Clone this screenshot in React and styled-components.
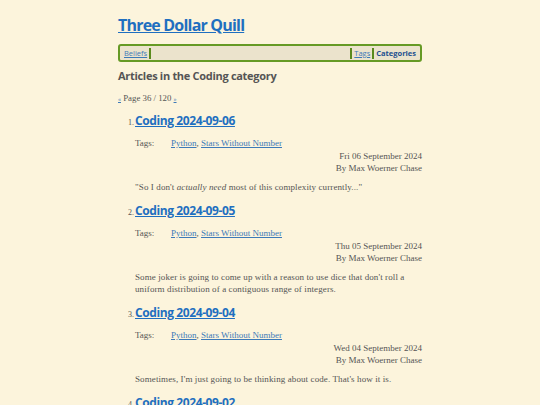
import React from "react";
import styled, { createGlobalStyle } from "styled-components";

const GlobalStyle = createGlobalStyle`
  body {
    margin: 0;
    background: #fcf4dc;
    font-family: "Liberation Serif", serif;
    color: #555;
  }
`;

const Page = styled.div`
  width: 304px;
  margin: 0 auto;
  padding-top: 14px;
`;

const SiteTitle = styled.a`
  display: block;
  font-family: "Open Sans", sans-serif;
  font-weight: 700;
  font-size: 16px;
  letter-spacing: -0.8px;
  line-height: 22px;
  color: #1f6fc0;
  text-decoration: underline;
`;

const Nav = styled.nav`
  display: flex;
  align-items: center;
  margin-top: 8px;
  height: 12px;
  padding: 1px 2px;
  border: 2px solid #669a25;
  border-radius: 3px;
  background: #ebe3cc;
  font-family: "Open Sans", sans-serif;
  font-size: 7.5px;
`;

const NavLink = styled.a`
  color: ${(p) => (p.$strong ? "#1d4f8f" : "#3d7ab8")};
  font-weight: ${(p) => (p.$strong ? 700 : 400)};
  text-decoration: ${(p) => (p.$strong ? "none" : "underline")};
  padding: 0 2px;
`;

const Sep = styled.span`
  width: 2px;
  height: 11px;
  background: #5a8a1c;
`;

const Spacer = styled.div`
  flex: 1;
`;

const Heading = styled.h1`
  margin: 5px 0 0;
  font-family: "Open Sans", sans-serif;
  font-weight: 700;
  font-size: 11px;
  letter-spacing: -0.3px;
  line-height: 18px;
  color: #555;
`;

const Pager = styled.div`
  margin-top: 7px;
  font-size: 8.8px;
  line-height: 12px;
  color: #555;
  a {
    color: #3d7ab8;
    font-size: 6px;
  }
`;

const List = styled.ol`
  list-style: none;
  margin: 6px 0 0;
  padding: 0;
`;

const Item = styled.li`
  margin-bottom: 8px;
`;

const TitleRow = styled.div`
  display: flex;
  align-items: baseline;
`;

const Num = styled.span`
  width: 17px;
  text-align: right;
  padding-right: 1px;
  box-sizing: border-box;
  font-size: 8px;
  color: #555;
`;

const PostTitle = styled.a`
  font-family: "Open Sans", sans-serif;
  font-weight: 700;
  font-size: 12px;
  letter-spacing: -0.4px;
  line-height: 20px;
  color: #1f6fc0;
  text-decoration: underline;
`;

const Body = styled.div`
  padding-left: 17px;
  font-size: 9px;
  line-height: 12px;
`;

const Tags = styled.div`
  display: flex;
  margin-top: 6px;
`;

const TagLabel = styled.span`
  width: 36px;
`;

const TagLink = styled.a`
  color: #3d7ab8;
  text-decoration: underline;
`;

const Meta = styled.div`
  margin-top: 1px;
  text-align: right;
`;

const Excerpt = styled.p`
  margin: 7px 0 0;
  letter-spacing: 0.1px;
`;

const posts = [
  {
    title: "Coding 2024-09-06",
    date: "Fri 06 September 2024",
    excerpt: (
      <>
        "So I don't <em>actually need</em> most of this complexity currently..."
      </>
    ),
  },
  {
    title: "Coding 2024-09-05",
    date: "Thu 05 September 2024",
    excerpt:
      "Some joker is going to come up with a reason to use dice that don't roll a uniform distribution of a contiguous range of integers.",
  },
  {
    title: "Coding 2024-09-04",
    date: "Wed 04 September 2024",
    excerpt: "Sometimes, I'm just going to be thinking about code. That's how it is.",
  },
  {
    title: "Coding 2024-09-02",
    date: "Mon 02 September 2024",
    excerpt: "",
  },
];

export default function App() {
  return (
    <>
      <GlobalStyle />
      <Page>
        <SiteTitle href="#">Three Dollar Quill</SiteTitle>
        <Nav>
          <NavLink href="#">Beliefs</NavLink>
          <Sep />
          <Spacer />
          <Sep />
          <NavLink href="#">Tags</NavLink>
          <Sep />
          <NavLink href="#" $strong>
            Categories
          </NavLink>
        </Nav>
        <Heading>Articles in the Coding category</Heading>
        <Pager>
          <a href="#">«</a> Page 36 / 120 <a href="#">»</a>
        </Pager>
        <List>
          {posts.map((p, i) => (
            <Item key={p.title}>
              <TitleRow>
                <Num>{i + 1}.</Num>
                <PostTitle href="#">{p.title}</PostTitle>
              </TitleRow>
              <Body>
                <Tags>
                  <TagLabel>Tags:</TagLabel>
                  <span>
                    <TagLink href="#">Python</TagLink>,{" "}
                    <TagLink href="#">Stars Without Number</TagLink>
                  </span>
                </Tags>
                <Meta>
                  {p.date}
                  <br />
                  By Max Woerner Chase
                </Meta>
                <Excerpt>{p.excerpt}</Excerpt>
              </Body>
            </Item>
          ))}
        </List>
      </Page>
    </>
  );
}
